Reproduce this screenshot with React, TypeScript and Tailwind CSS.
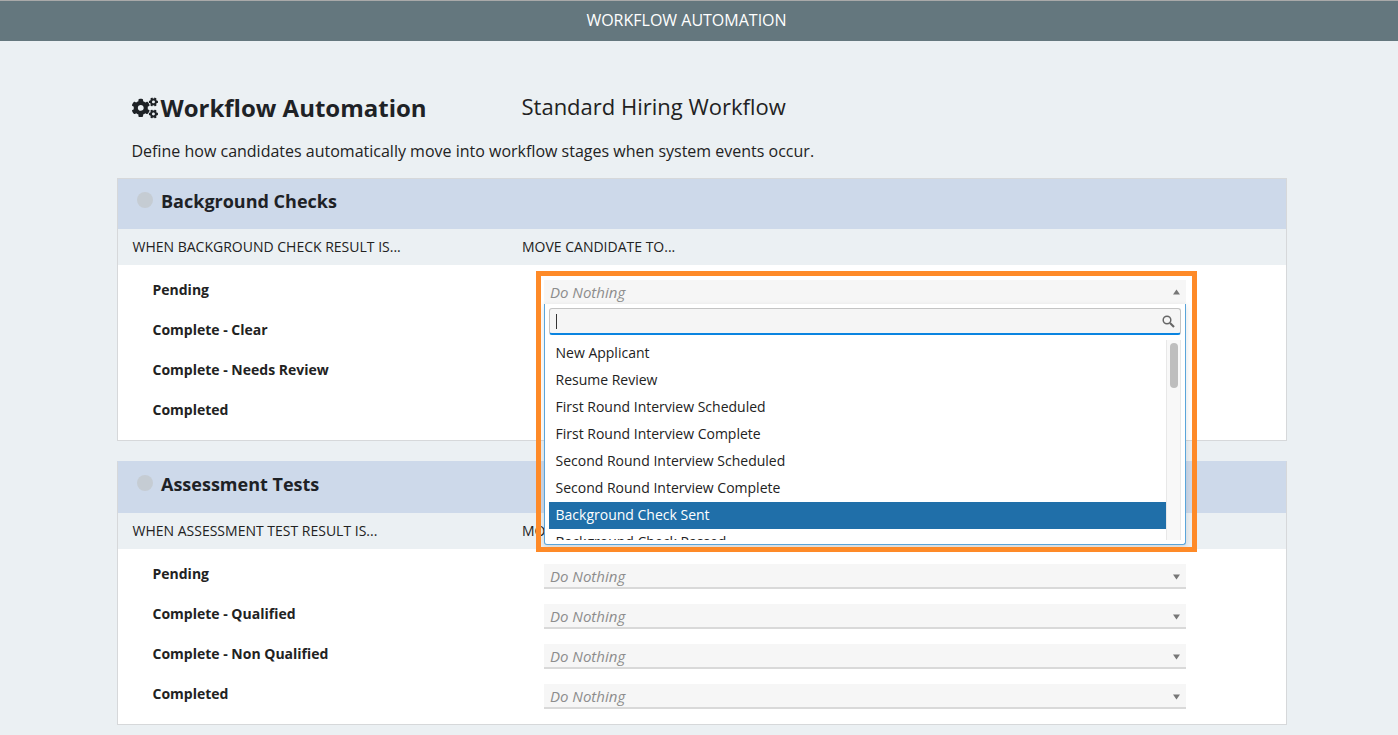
import { FaCogs } from "react-icons/fa";

const stages = [
  "New Applicant",
  "Resume Review",
  "First Round Interview Scheduled",
  "First Round Interview Complete",
  "Second Round Interview Scheduled",
  "Second Round Interview Complete",
  "Background Check Sent",
  "Background Check Passed",
];

function Dropdown() {
  return (
    <div className="absolute left-0 top-[24px] z-20 h-[241px] w-[642px] overflow-hidden rounded-b-[3px] border border-t-0 border-[#5aa5da] bg-white shadow-[0_2px_6px_rgba(0,0,0,0.12)]">
      <div className="mx-[4px] mt-[4px] flex h-[27px] items-center justify-between rounded-[3px] border border-[#c4c4c4] border-b-[2px] border-b-[#0a84e0] bg-[#f5f5f5] pl-[6px] pr-[5px]">
        <span className="h-[15px] w-px bg-[#333]" />
        <svg width="13" height="13" viewBox="0 0 13 13" fill="none" stroke="#666">
          <circle cx="5" cy="5" r="3.8" strokeWidth="1.5" />
          <path d="M8 8l4 4" strokeWidth="2.2" />
        </svg>
      </div>
      <div className="relative mt-[5px] h-[200px] overflow-hidden pl-[4px]">
        {stages.map((s) => (
          <div
            key={s}
            className={`flex h-[27px] w-[617px] items-center pb-[2px] pl-[6.5px] text-[14px] ${
              s === "Background Check Sent" ? "bg-[#206fa9] text-white" : "text-[#222]"
            }`}
          >
            {s}
          </div>
        ))}
        <div className="absolute right-[4px] top-0 h-[200px] w-[15px] border-x border-[#e8e8e8] bg-[#f8f8f8]">
          <div className="mx-auto mt-[3px] h-[45px] w-[8px] rounded-full bg-[#bebebe]" />
        </div>
      </div>
    </div>
  );
}

function SelectBox({ open }: { open?: boolean }) {
  return (
    <div className="relative h-[25px] w-[642px]">
      <div
        className={`flex items-center justify-between bg-[#f6f6f6] pl-[6px] pr-[6px] ${
          open ? "h-[24px]" : "h-[25px] border-b-2 border-[#d9d9d9] pt-[2px]"
        }`}
      >
        <span className="text-[15px] italic text-[#8d8d8d]">Do Nothing</span>
        <svg width="7" height="6" viewBox="0 0 7 6" className={open ? "" : "rotate-180"}>
          <path d="M3.5 0.5 7 5.5H0z" fill="#777" />
        </svg>
      </div>
      {open && <Dropdown />}
    </div>
  );
}

function Section({
  title,
  when,
  rows,
  open,
}: {
  title: string;
  when: string;
  rows: string[];
  open?: boolean;
}) {
  return (
    <section
      className={`w-[1170px] border border-[#d6d8da] bg-white ${open ? "" : "border-t-[#cdd9ea]"}`}
    >
      <div
        className={`flex items-center bg-[#cdd9ea] pl-[19px] ${
          open ? "h-[50px] pb-[6px]" : "h-[51px] pb-[7px]"
        }`}
      >
        <span className="mb-[2px] h-[16px] w-[16px] rounded-full bg-[#c5ccd3]" />
        <h2 className="ml-[8px] text-[18px] font-bold text-[#1e2226]">{title}</h2>
      </div>
      <div className="flex h-[36px] items-center bg-[#ebf0f3] pb-[2px] pl-[14.5px] text-[14px] text-[#222]">
        <span className="w-[389.5px]">{when}</span>
        <span>MOVE CANDIDATE TO...</span>
      </div>
      <div className="flex flex-col gap-[15px] py-[15px]">
        {rows.map((r, i) => (
          <div key={r} className="flex h-[25px] items-start">
            <span className="w-[426px] pl-[34.5px] text-[14px] font-bold leading-[20px] text-[#222]">
              {r}
            </span>
            <SelectBox open={open && i === 0} />
          </div>
        ))}
      </div>
    </section>
  );
}

export default function App() {
  return (
    <div
      className="relative h-[735px] w-[1398px] overflow-hidden bg-[#ebf0f3] text-[#222]"
      style={{ fontFamily: '"Open Sans", "Noto Sans", sans-serif' }}
    >
      <header className="flex h-[41px] items-center justify-center border-t border-[#a9a9a9] bg-[#64777e] pb-[2px] pr-[25px] text-[16px] text-white">
        WORKFLOW AUTOMATION
      </header>
      <main className="pl-[117px]">
        <div className="flex items-center pl-[14.5px] pt-[50px]">
          <FaCogs size={26} className="text-[#1e2226]" />
          <h1 className="ml-[3px] w-[361px] text-[24px] font-bold leading-[34px] text-[#1e2226]">
            Workflow Automation
          </h1>
          <span className="pb-[4px] text-[22px] leading-[30px] text-[#222]">Standard Hiring Workflow</span>
        </div>
        <p className="pl-[14.5px] pt-[15px] text-[16px] leading-[22px]">
          Define how candidates automatically move into workflow stages when system events occur.
        </p>
        <div className="mt-[16px] flex flex-col gap-[20px]">
          <Section
            title="Background Checks"
            when="WHEN BACKGROUND CHECK RESULT IS..."
            rows={["Pending", "Complete - Clear", "Complete - Needs Review", "Completed"]}
            open
          />
          <Section
            title="Assessment Tests"
            when="WHEN ASSESSMENT TEST RESULT IS..."
            rows={["Pending", "Complete - Qualified", "Complete - Non Qualified", "Completed"]}
          />
        </div>
      </main>
      <div className="absolute left-[536px] top-[271px] z-30 h-[281px] w-[661px] border-[5px] border-[#fe8a28]" />
    </div>
  );
}
